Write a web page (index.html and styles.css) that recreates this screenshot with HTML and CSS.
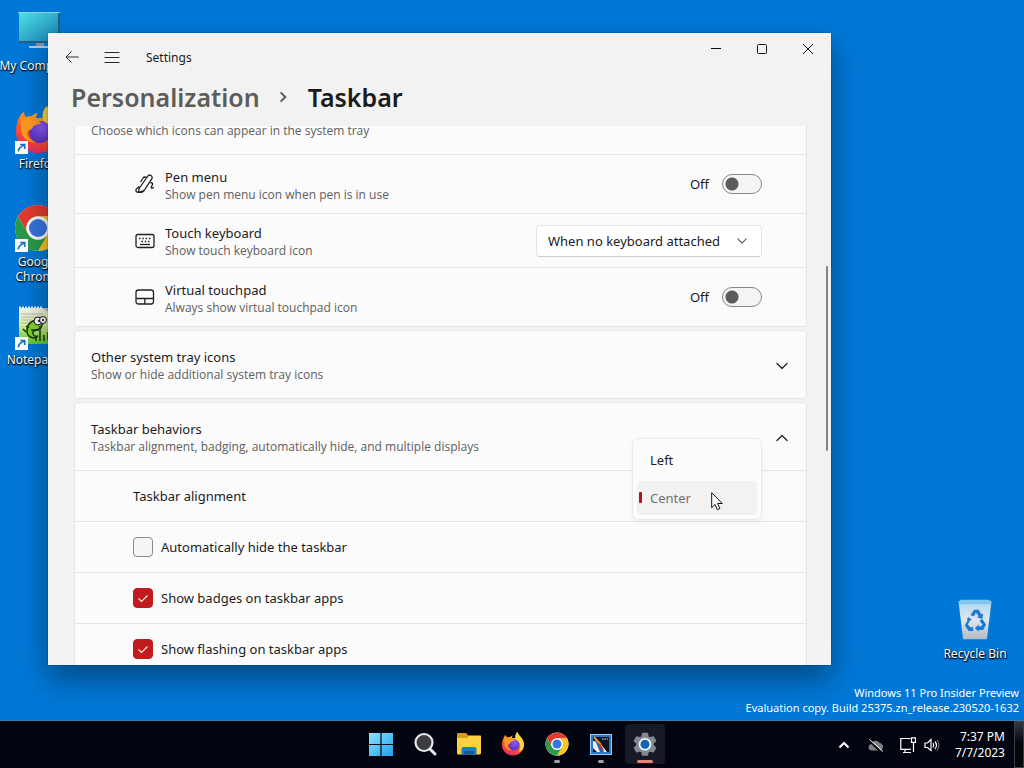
FILE: index.html
```html
<!DOCTYPE html>
<html lang="en">
<head>
<meta charset="utf-8">
<title>Settings - Taskbar</title>
<link rel="stylesheet" href="styles.css">
</head>
<body>
<svg class="defs" aria-hidden="true">
  <defs>
    <linearGradient id="ffBody" x1="0.8" y1="0" x2="0.3" y2="1">
      <stop offset="0" stop-color="#ffe226"/><stop offset="0.35" stop-color="#ff9a1f"/><stop offset="0.7" stop-color="#ff4f2e"/><stop offset="1" stop-color="#e5236b"/>
    </linearGradient>
    <radialGradient id="ffGlobe" cx="0.6" cy="0.3" r="0.8">
      <stop offset="0" stop-color="#9059ff"/><stop offset="1" stop-color="#4a2fb5"/>
    </radialGradient>
    <linearGradient id="screen" x1="0" y1="0" x2="1" y2="1">
      <stop offset="0" stop-color="#4fe0e4"/><stop offset="1" stop-color="#1580b4"/>
    </linearGradient>
    <linearGradient id="win" x1="0" y1="0" x2="1" y2="1">
      <stop offset="0" stop-color="#8be4fc"/><stop offset="1" stop-color="#1ea0ee"/>
    </linearGradient>
    <linearGradient id="bin" x1="0" y1="0" x2="0" y2="1">
      <stop offset="0" stop-color="#b4d8f0"/><stop offset="0.5" stop-color="#dce6ee"/><stop offset="1" stop-color="#b3bac4"/>
    </linearGradient>
    <linearGradient id="note" x1="0" y1="0" x2="0" y2="1">
      <stop offset="0" stop-color="#f4f6ee"/><stop offset="0.45" stop-color="#dff0a0"/><stop offset="1" stop-color="#5cc82c"/>
    </linearGradient>
    <symbol id="firefox" viewBox="0 0 48 48">
      <path fill="url(#ffBody)" d="M6 10c1-2 2-3 4-4 0 2 1 4 2 5 2-1 4-1 6-1 2-2 4-3 6-3-2 2-2 4-2 5h7c-1-5 1-9 4-12 1 5 5 8 8 12 5 6 6 14 4 20-3 9-11 15-21 15C12 47 2 38 2 26c0-6 1-11 4-16z"/>
      <path fill="#ffd83a" d="M33 0c1 5 5 8 8 12 5 6 6 14 3 21-2 4-6 6-9 7 5-6 5-14 1-19-3-4-9-7-7-13 0-3 2-6 4-8z"/>
      <circle cx="26" cy="26" r="11" fill="url(#ffGlobe)"/>
      <path fill="#ff9a1f" d="M6 12c5-2 10-1 13 2 4-1 7 1 8 4-3 0-7 1-8 3-1 3-4 3-6 5 0 5 4 9 9 10-8 2-15-5-15-13 0-4 0-7-1-11z"/>
    </symbol>
    <symbol id="chrome" viewBox="0 0 48 48">
      <circle cx="24" cy="24" r="23" fill="#fff"/>
      <path fill="#e33b2e" d="M4.100 12.500A23 23 0 0 1 43.900 12.500H24A11.500 11.500 0 0 0 14 29.800z"/>
      <path fill="#fcc31e" d="M43.900 12.500A23 23 0 0 1 24 47L34 29.800A11.500 11.500 0 0 0 24 12.500z"/>
      <path fill="#2a9b48" d="M24 47A23 23 0 0 1 4.100 12.500L14 29.800A11.500 11.500 0 0 0 34 29.800z"/>
      <circle cx="24" cy="24" r="11.500" fill="#fff"/>
      <circle cx="24" cy="24" r="9" fill="#3874e0"/>
    </symbol>
    <symbol id="shortcut" viewBox="0 0 12 12">
      <path fill="#fff" d="M0 0h12v12H0z"/>
      <path fill="none" stroke="#1b74c8" stroke-width="1.500" d="M3 9.500C3.300 7 5 5.200 8.300 4M4.800 3.200h4.200v4.200"/>
    </symbol>
    <symbol id="chev" viewBox="0 0 12 12">
      <path fill="none" stroke="currentColor" stroke-width="1.300" stroke-linecap="round" stroke-linejoin="round" d="M1 3.500l5 5 5-5"/>
    </symbol>
  </defs>
</svg>

<div class="desktop">
  <main class="workspace">
    <nav class="shortcuts" aria-label="Desktop icons">
      <a class="shortcut" href="#computer">
        <svg class="shortcut-icon" viewBox="0 0 48 48"><path fill="#245d86" d="M5 4h41v31H5z"/><path fill="#8fd0e4" d="M4 4h42v1H4z"/><path fill="url(#screen)" d="M5 5h39v28H5z"/><path fill="#7d98ab" d="M22 35h8v4h-8z"/><path fill="#b9cad6" d="M15 38h22v2H15z"/></svg>
        <span>My Computer</span>
      </a>
      <a class="shortcut" href="#firefox">
        <span class="shortcut-art"><svg class="shortcut-icon"><use href="#firefox"/></svg><svg class="link-badge"><use href="#shortcut"/></svg></span>
        <span>Firefox</span>
      </a>
      <a class="shortcut" href="#chrome">
        <span class="shortcut-art"><svg class="shortcut-icon"><use href="#chrome"/></svg><svg class="link-badge"><use href="#shortcut"/></svg></span>
        <span>Google<br>Chrome</span>
      </a>
      <a class="shortcut" href="#notepad">
        <span class="shortcut-art"><svg class="shortcut-icon" viewBox="0 0 48 48"><path fill="url(#note)" d="M5 6h26l11 10v26H5z"/><path fill="#c3c9c3" d="M28 6l12 8V6z"/><path stroke="#b5bbb5" d="M7 12h22M7 15h24M7 18h10M7 21h8"/><path fill="none" stroke="#eef3f0" stroke-width="3" stroke-dasharray="2 1" d="M5 6h24"/><path fill="#83d32e" stroke="#173708" stroke-width="1.500" d="M13 29c0-9 9-14 16-9l-2 6c-3 2-6 1-8 4-1 3 2 5 5 4-4 4-11 1-11-5z"/><circle cx="24" cy="19" r="4" fill="#fff" stroke="#222"/><circle cx="29" cy="18" r="3.500" fill="#fff" stroke="#222"/><circle cx="25" cy="19" r="1"/><circle cx="29" cy="18" r="1"/><path fill="none" stroke="#173708" stroke-width="1.500" d="M9 27l3 3M12 24l3 2M17 28h8M26 24v7M22 39v-5M26 39v-8M30 39v-6M34 38v-8"/></svg><svg class="link-badge"><use href="#shortcut"/></svg></span>
        <span>Notepad++</span>
      </a>
    </nav>

    <a class="shortcut recycle" href="#bin">
      <svg class="shortcut-icon" viewBox="0 0 48 48"><path fill="url(#bin)" d="M6 5h36l-5 41H11z"/><path fill="#80c8ef" d="M6 5l3-2h30l3 2-1 3H7z"/><g fill="#1b79d2"><path d="M19 20l4-6h5l3 5 2-1-1 6-6-2 2-1-3-4-2 4z"/><path d="M17 22l4 3-2 0-3 5 3 3h3v4h-5l-4-6 3-6-1-1z"/><path d="M32 24l4 6-3 6h-5v2l-4-4 4-4v2h3l1-2-3-4z"/></g></svg>
      <span>Recycle Bin</span>
    </a>

    <p class="watermark">Windows 11 Pro Insider Preview<br>Evaluation copy. Build 25375.zn_release.230520-1632</p>

    <section class="window" aria-label="Settings">
      <header class="titlebar">
        <button class="nav-btn" aria-label="Back"><svg viewBox="0 0 16 16"><path d="M14.500 8H2M7.500 2.500L2 8l5.500 5.500"/></svg></button>
        <button class="nav-btn" aria-label="Open navigation"><svg viewBox="0 0 16 16"><path d="M.5 3.500h15M.5 8.500h15M.5 13.500h15"/></svg></button>
        <span class="app-name">Settings</span>
        <div class="caption">
          <button class="cap-btn" aria-label="Minimize"><svg viewBox="0 0 12 12"><path d="M1 5.500h10"/></svg></button>
          <button class="cap-btn" aria-label="Maximize"><svg viewBox="0 0 12 12"><rect x="1.500" y="1.500" width="9" height="9" rx="1"/></svg></button>
          <button class="cap-btn" aria-label="Close"><svg viewBox="0 0 12 12"><path d="M1 1l10 10M11 1L1 11"/></svg></button>
        </div>
      </header>
      <h1 class="crumbs">
        <a href="#personalization">Personalization</a>
        <svg class="crumb-sep" viewBox="0 0 12 12"><path d="M3.500 2.500L7 6 3.500 9.500"/></svg>
        <span>Taskbar</span>
      </h1>

      <div class="body">
        <div class="content">
          <section class="card card-scrolled" aria-label="System tray icons">
            <div class="card-head card-head-scrolled">
              <div class="text"><p>Choose which icons can appear in the system tray</p></div>
            </div>
            <div class="row row-tall">
              <svg class="row-icon" viewBox="0 0 20 20"><path d="M7 17.500l-3.500.8.600-3.800L12.500 2.500c1-1.500 2.400-1.700 3.500-1 1.300.8 1.500 2.300.6 3.700L9.500 16zM12.500 3.500L8.800 3 5.500 8M4.300 12.500L1.500 15c-1 1-.8 2.500.3 3l1.700.3M15.500 8.500c2 0 2.500 1.300 1.800 2.500l-1 1.800c-.4.900.3 1.600 1 1.300l1.500-.8M9.500 16c-1 2-3 2.800-6 2.300"/></svg>
              <div class="text"><h3>Pen menu</h3><p>Show pen menu icon when pen is in use</p></div>
              <label class="switch">Off<input type="checkbox" role="switch" aria-label="Pen menu"></label>
            </div>
            <div class="row row-mid">
              <svg class="row-icon" viewBox="0 0 20 20"><rect x="1" y="3.500" width="18" height="13" rx="2"/><path stroke-dasharray="1.500 1.800" stroke-width="1.500" d="M4 7.500h12M6.500 10.500h8"/><path d="M5 13.500h10"/></svg>
              <div class="text"><h3>Touch keyboard</h3><p>Show touch keyboard icon</p></div>
              <div class="select">
                <select aria-label="Touch keyboard"><option>When no keyboard attached</option><option>Never</option><option>Always</option></select>
                <svg class="select-chev"><use href="#chev"/></svg>
              </div>
            </div>
            <div class="row row-tall">
              <svg class="row-icon" viewBox="0 0 20 20"><rect x="1" y="3" width="17.500" height="14" rx="2.500"/><path d="M1 11.500h17.500M9.800 11.500V17"/></svg>
              <div class="text"><h3>Virtual touchpad</h3><p>Always show virtual touchpad icon</p></div>
              <label class="switch">Off<input type="checkbox" role="switch" aria-label="Virtual touchpad"></label>
            </div>
          </section>

          <section class="card">
            <div class="card-head">
              <div class="text"><h2>Other system tray icons</h2><p>Show or hide additional system tray icons</p></div>
              <button class="expander" aria-label="Expand"><svg><use href="#chev"/></svg></button>
            </div>
          </section>

          <section class="card">
            <div class="card-head">
              <div class="text"><h2>Taskbar behaviors</h2><p>Taskbar alignment, badging, automatically hide, and multiple displays</p></div>
              <button class="expander expander-open" aria-label="Collapse"><svg><use href="#chev"/></svg></button>
            </div>
            <div class="row row-plain">
              <h3>Taskbar alignment</h3>
              <div class="menu" role="listbox" aria-label="Taskbar alignment">
                <button class="menu-item" role="option" aria-selected="false">Left</button>
                <button class="menu-item menu-item-current" role="option" aria-selected="true">Center</button>
                <svg class="cursor" viewBox="0 0 12 19"><path fill="#fff" stroke="#111" d="M.7 1.200v15l3.400-3.300 2.300 5.300 2.500-1.100-2.300-5.100h4.700z"/></svg>
              </div>
            </div>
            <label class="row row-plain"><input class="check" type="checkbox">Automatically hide the taskbar</label>
            <label class="row row-plain"><input class="check" type="checkbox" checked>Show badges on taskbar apps</label>
            <label class="row row-plain"><input class="check" type="checkbox" checked>Show flashing on taskbar apps</label>
          </section>
        </div>
        <div class="scroll-thumb"></div>
      </div>
    </section>
  </main>

  <footer class="taskbar">
    <nav class="apps" aria-label="Taskbar">
      <button class="app" aria-label="Start"><svg viewBox="0 0 24 24"><path fill="url(#win)" d="M0 1h11.400v11H0zM12.600 1H24v11H12.600zM0 13h11.400v11H0zM12.600 13H24v11H12.600z"/></svg></button>
      <button class="app" aria-label="Search"><svg viewBox="0 0 24 24"><circle cx="11" cy="10.500" r="8.500" fill="#3a3c42" stroke="#e9eaee" stroke-width="2.200"/><path stroke="#e9eaee" stroke-width="3" stroke-linecap="round" d="M17.500 17.500l4.500 4.500"/></svg></button>
      <button class="app" aria-label="File Explorer"><svg viewBox="0 0 24 24"><path fill="#d99a12" d="M0 2.500C0 1.500.6 1 1.500 1H9l3 3v4H0z"/><path fill="#fdd043" d="M0 6h10l2-2.500h11c.6 0 1 .4 1 1V21c0 .8-.6 1.500-1.500 1.500h-21C.6 22.500 0 21.800 0 21z"/><path fill="#1d7bc4" d="M4.500 22.500V17c0-1.300.8-2 2-2h11c1.200 0 2 .7 2 2v5.500z"/><path fill="#125a9a" d="M7 19h10v3.500H7z"/></svg></button>
      <button class="app" aria-label="Firefox"><svg><use href="#firefox"/></svg></button>
      <button class="app app-running" aria-label="Google Chrome"><svg><use href="#chrome"/></svg></button>
      <button class="app app-running" aria-label="System utility"><svg viewBox="0 0 24 24"><path fill="#9cccf5" d="M1 2h22v21H1z"/><path fill="#2a76c8" d="M2 3h20v19H2z"/><path fill="#10131c" d="M4 5h16v15H4z"/><path fill="#f1f2ec" d="M4 9l6 1 8 10H8L4 16z"/><path fill="#2262b3" d="M5 6l5 4 5 10h-4z"/><path stroke="#ea8b22" stroke-width="2" d="M5 5l7 8"/><path stroke="#c03b25" stroke-width="2" d="M10 12l4 6"/><path stroke="#e9edf5" stroke-dasharray="1.500 1" d="M13 7h6"/></svg></button>
      <button class="app app-active" aria-label="Settings"><svg viewBox="0 0 24 24"><path fill="#858991" stroke="#858991" stroke-width="1.500" stroke-linejoin="round" d="M9.700 1.500h4.600l.7 3.300 2 1.100 3.200-1 2.300 4-2.500 2.300v2.300l2.500 2.300-2.300 4-3.200-1-2 1.100-.7 3.100H9.700L9 19.900l-2-1.100-3.200 1-2.300-4L4 13.500v-2.300L1.500 8.900l2.300-4 3.200 1 2-1.100z"/><circle cx="12" cy="12.200" r="6.300" fill="#eef4fa"/><circle cx="12" cy="12.200" r="4.500" fill="#1465b4"/></svg></button>
    </nav>
    <div class="tray">
      <button class="tray-btn tray-more" aria-label="Show hidden icons"><svg viewBox="0 0 12 12"><path fill="none" stroke="#fff" stroke-width="2" d="M1.500 8.500L6 4l4.500 4.500"/></svg></button>
      <button class="tray-btn tray-cloud" aria-label="OneDrive"><svg viewBox="0 0 16 16"><path fill="#7d8186" d="M3.500 13.500a3.300 3.300 0 0 1-.3-6.500 4.500 4.500 0 0 1 8.300-1 3.900 3.900 0 0 1 1 7.500z"/><path stroke="#05070c" stroke-width="2" d="M1 3.500l12.500 12"/><path stroke="#fff" d="M1.500 2.500L15 14.500"/></svg></button>
      <button class="tray-btn" aria-label="Network"><svg viewBox="0 0 16 16"><path fill="none" stroke="#fff" stroke-width="1.200" d="M10.500 1.500H.8v10.800h10M5 12.500v3M3 15.500h8M11.500.8h4v4.500h-4zM13.500 5.500v9.500"/></svg></button>
      <button class="tray-btn" aria-label="Volume"><svg viewBox="0 0 16 16"><path fill="none" stroke="#fff" stroke-width="1.200" d="M1 6v4.500h2.500L7 13.500v-11L3.500 6zM9 6q1.500 2 0 4.500M11 4.500q3 3.700 0 7.500"/><path fill="none" stroke="#7c8087" d="M13 3q4 5 0 10.500"/></svg></button>
      <time class="clock" datetime="2023-07-07T19:37">7:37 PM<br>7/7/2023</time>
      <button class="show-desktop" aria-label="Show desktop"></button>
    </div>
  </footer>
</div>
</body>
</html>
```
FILE: styles.css
```css
* { box-sizing: border-box; }
body, h1, h2, h3, p { margin: 0; font-weight: 400; }
body { font: 13px/18px "Noto Sans", "Open Sans", sans-serif; color: #1b1b1b; }
button { border: 0; padding: 0; background: none; font: inherit; color: inherit; }
a { color: inherit; text-decoration: none; }
svg { display: block; }
.defs { position: absolute; width: 0; height: 0; }

.desktop { display: flex; flex-direction: column; height: 100vh; overflow: hidden; background: #0078d7; }
.workspace { position: relative; flex: 1; overflow: hidden; }

/* Desktop icons */
.shortcuts { display: flex; flex-direction: column; width: 76px; padding-top: 8px; }
.shortcut {
  display: flex; flex-direction: column; align-items: center; gap: 2px;
  width: 76px; height: 98px; color: #fff; font-size: 12px; line-height: 15px; text-align: center;
  white-space: nowrap; text-shadow: 1px 1px 2px #000, 0 1px 1px #000;
}
.shortcut-art { position: relative; }
.shortcut-icon { width: 48px; height: 48px; }
.link-badge { position: absolute; left: 1px; bottom: 0; width: 13px; height: 13px; }
.recycle { position: absolute; right: 11px; bottom: 28px; }
.recycle .shortcut-icon { height: 50px; padding: 3px 0; }
.watermark { position: absolute; right: 5px; bottom: 5px; color: #fff; font-size: 11px; line-height: 15px; text-align: right; }

/* Settings window */
.window {
  position: absolute; left: 48px; right: 193px; top: 33px; bottom: 55px;
  display: flex; flex-direction: column; background: #f2f2f2;
  box-shadow: 0 0 1px rgba(0, 0, 0, .5), 0 14px 30px rgba(0, 0, 0, .4);
}
.titlebar { display: flex; align-items: center; height: 48px; padding-left: 4px; }
.nav-btn { display: grid; place-items: center; width: 40px; height: 40px; }
.nav-btn svg { width: 16px; height: 16px; fill: none; stroke: #2a2a2a; }
.app-name { padding: 2px 0 0 14px; font-size: 12px; }
.caption { display: flex; align-self: flex-start; margin-left: auto; }
.cap-btn { display: grid; place-items: center; width: 46px; height: 32px; }
.cap-btn svg { width: 12px; height: 12px; fill: none; stroke: #111; }
.crumbs { display: flex; align-items: center; gap: 16px; height: 45px; padding: 0 23px 14px; font-size: 25px; line-height: 32px; font-weight: 600; }
.crumbs a { color: #5c5c5c; }
.crumb-sep { width: 16px; height: 16px; fill: none; stroke: #5c5c5c; stroke-width: 1.5; }
.body { position: relative; flex: 1; overflow: hidden; }
.content { display: flex; flex-direction: column; gap: 3px; padding: 0 24px 0 26px; }
.scroll-thumb { position: absolute; right: 3px; top: 140px; width: 2px; height: 185px; border-radius: 1px; background: #858585; }

.card { border: 1px solid #e5e5e5; border-radius: 4px; background: #fbfbfb; }
.card-head { display: flex; align-items: center; justify-content: space-between; height: 67px; padding: 3px 14px 0 16px; }
.card-scrolled { border-top: 0; border-radius: 0 0 4px 4px; }
.card-head-scrolled { align-items: flex-end; height: 28px; padding-bottom: 14px; }
.text p { color: #606060; font-family: "Open Sans", "Noto Sans", sans-serif; font-size: 12px; }
.row h3, .card h2 { font-size: 13px; line-height: 18px; }
.row { position: relative; display: flex; align-items: center; border-top: 1px solid #e5e5e5; padding: 0 44px 0 60px; }
.row .text { flex: 1; padding: 3px 0 0 10px; }
.row-tall { height: 59px; }
.row-mid { height: 54px; }
.row-plain { height: 51px; padding-left: 58px; }
.row-icon { width: 20px; height: 20px; fill: none; stroke: #222; stroke-width: 1.3; stroke-linejoin: round; }
.expander { display: grid; place-items: center; width: 20px; height: 20px; color: #222; }
.expander svg { width: 12px; height: 12px; }
.expander-open svg { transform: rotate(180deg); }

/* Controls */
.switch { display: flex; align-items: center; gap: 13px; }
.switch input {
  appearance: none; width: 40px; height: 20px; margin: 0; border: 1px solid #868686; border-radius: 10px;
  background: radial-gradient(circle at 9px 9px, #5c5c5c 6px, #f4f4f4 7px);
}
.select { position: relative; }
.select select {
  appearance: none; height: 32px; padding: 0 40px 0 11px; border: 1px solid #e3e3e3; border-bottom-color: #cccccc;
  border-radius: 4px; background: #fff; color: #1b1b1b; font: inherit;
}
.select-chev { position: absolute; right: 15px; top: 11px; width: 10px; height: 10px; color: #555; pointer-events: none; }
.check { appearance: none; width: 20px; height: 20px; margin: 0 8px 0 0; border: 1px solid #8a8a8a; border-radius: 4px; background: #f5f5f5; }
.check:checked {
  border-color: #c01b1e;
  background: #c01b1e url("data:image/svg+xml,%3Csvg xmlns='http://www.w3.org/2000/svg' viewBox='0 0 18 18'%3E%3Cpath d='M4.500 9.500l3 3 6-6' fill='none' stroke='%23ffe9d8' stroke-width='1.200'/%3E%3C/svg%3E");
}
.menu {
  position: absolute; right: 44px; top: -33px; z-index: 1; width: 130px; padding: 4px;
  border: 1px solid #e9e9e9; border-radius: 6px; background: #fcfcfc; box-shadow: 0 2px 5px rgba(0, 0, 0, .05);
  display: flex; flex-direction: column; gap: 4px;
}
.menu-item { height: 34px; padding-left: 13px; border-radius: 4px; text-align: left; }
.menu-item-current { position: relative; background: #f2f2f2; color: #737373; }
.menu-item-current::before { content: ""; position: absolute; left: 2px; top: 11px; width: 3px; height: 11px; border-radius: 1px; background: #b5121f; }
.cursor { position: absolute; right: 38px; bottom: 8px; width: 12px; height: 20px; }

/* Taskbar */
.taskbar { display: grid; grid-template-columns: 1fr auto 1fr; height: 48px; border-top: 1px solid #3e7cae; background: #02050f; color: #fff; }
.apps { grid-column: 2; display: flex; align-items: center; gap: 4px; padding: 0 0 2px 2px; }
.app { position: relative; display: grid; place-items: center; width: 40px; height: 40px; border-radius: 4px; }
.app svg { width: 24px; height: 24px; }
.app-active { background: #161a24; }
.app-running::after, .app-active::after { content: ""; position: absolute; left: 17px; bottom: 1px; width: 6px; height: 3px; border-radius: 2px; background: #a0a3a8; }
.app-active::after { left: 12px; width: 16px; background: #ec7f7b; }
.tray { display: flex; align-items: center; justify-content: flex-end; }
.tray-btn { display: grid; place-items: center; width: 24px; height: 32px; }
.tray-btn svg { width: 16px; height: 16px; }
.tray-more, .tray-cloud { width: 32px; }
.tray-more svg { width: 12px; height: 12px; }
.tray-cloud { margin-right: 4px; }
.clock { margin: 0 9px 0 11px; font-size: 12px; line-height: 16px; text-align: right; white-space: nowrap; }
.show-desktop { width: 10px; height: 100%; border: 1px solid #3b4048; background: linear-gradient(#343943, #05070d 45%); }
```
